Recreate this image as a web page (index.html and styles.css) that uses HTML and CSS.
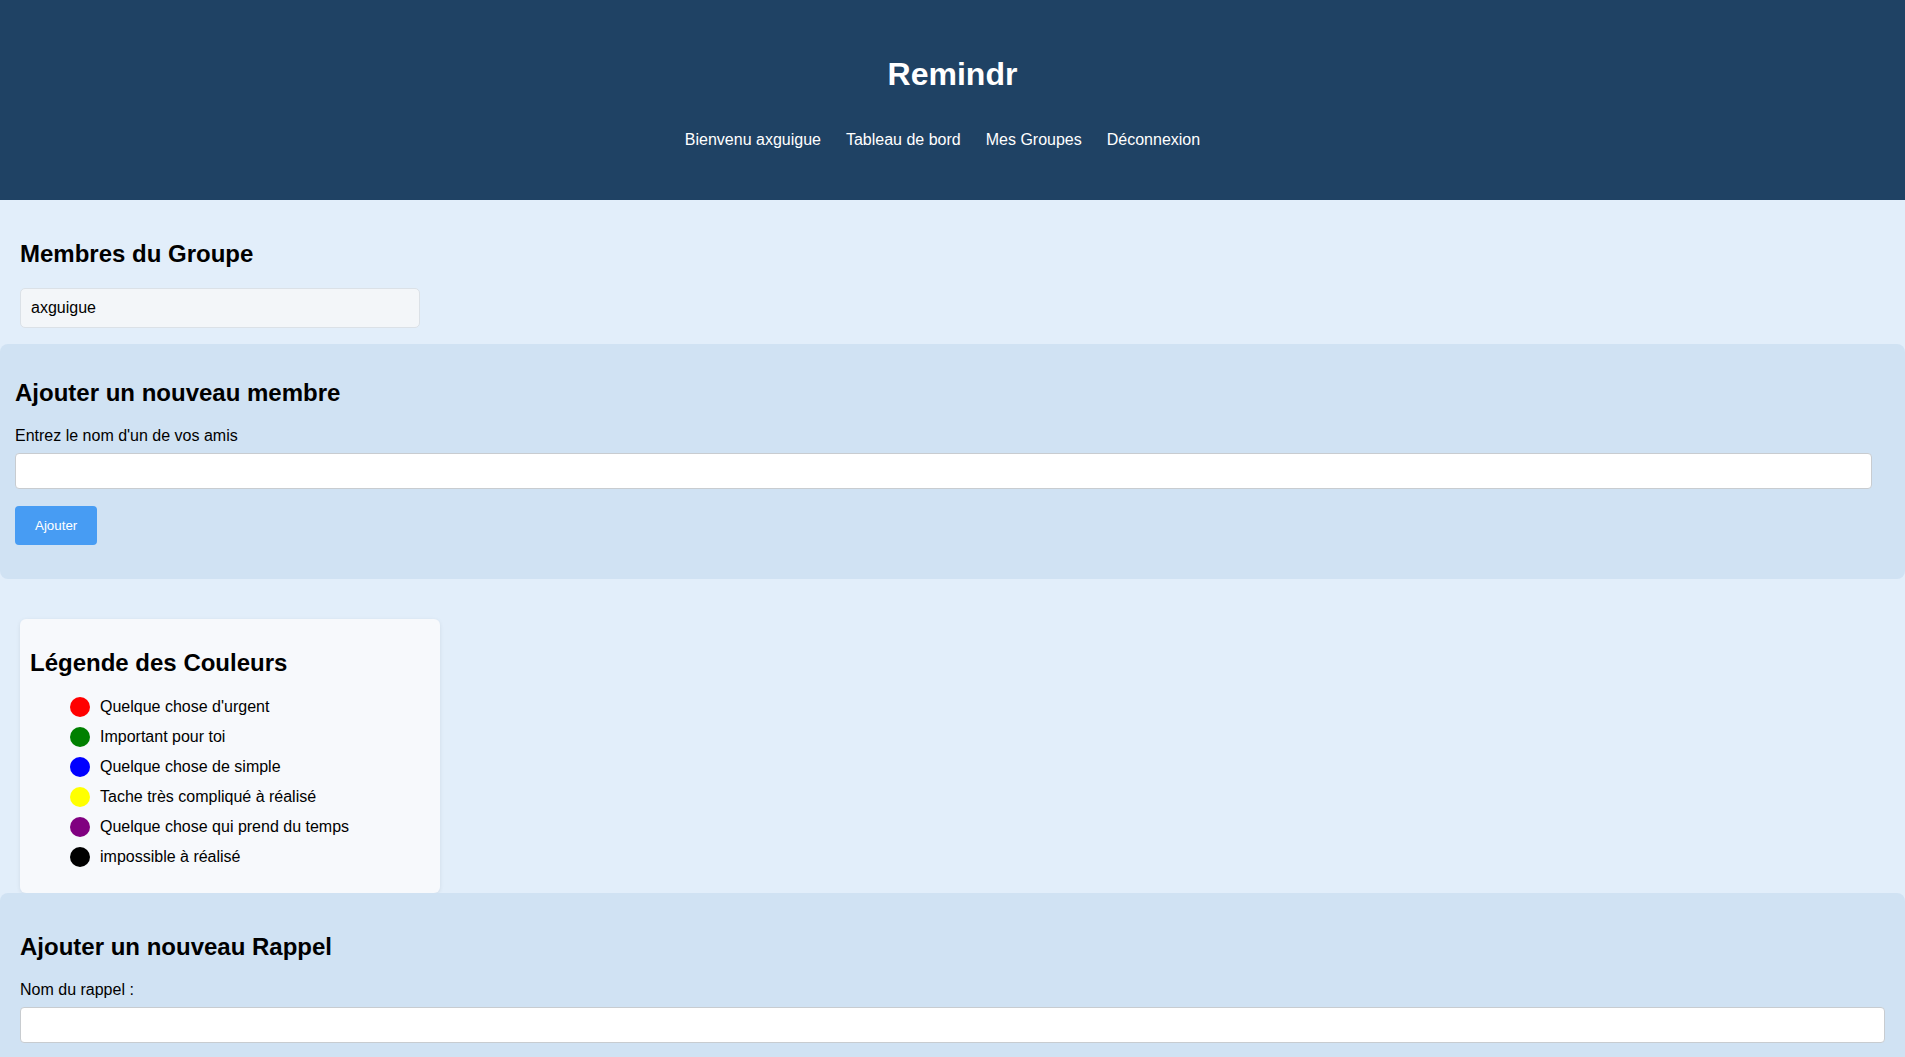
FILE: index.html
```html
<!DOCTYPE html>
<html lang="fr">
<head>
<meta charset="utf-8">
<title>Remindr</title>
<link rel="stylesheet" href="styles.css">
</head>
<body>
<header class="site-header">
  <h1 class="brand">Remindr</h1>
  <nav>
    <ul class="nav-list">
      <li><a href="#">Bienvenu axguigue</a></li>
      <li><a href="#">Tableau de bord</a></li>
      <li><a href="#">Mes Groupes</a></li>
      <li><a href="#">Déconnexion</a></li>
    </ul>
  </nav>
</header>
<main>
  <section class="members">
    <h2>Membres du Groupe</h2>
    <ul class="member-list">
      <li class="member">axguigue</li>
    </ul>
  </section>

  <section class="panel add-member">
    <h2>Ajouter un nouveau membre</h2>
    <form>
      <label class="field-label" for="friend">Entrez le nom d'un de vos amis</label>
      <input class="text-input member-input" id="friend" type="text">
      <button class="btn" type="button">Ajouter</button>
    </form>
  </section>

  <section class="legend">
    <h2>Légende des Couleurs</h2>
    <ul class="legend-list">
      <li><span class="dot dot-red"></span>Quelque chose d'urgent</li>
      <li><span class="dot dot-green"></span>Important pour toi</li>
      <li><span class="dot dot-blue"></span>Quelque chose de simple</li>
      <li><span class="dot dot-yellow"></span>Tache très compliqué à réalisé</li>
      <li><span class="dot dot-purple"></span>Quelque chose qui prend du temps</li>
      <li><span class="dot dot-black"></span>impossible à réalisé</li>
    </ul>
  </section>

  <section class="panel add-reminder">
    <h2>Ajouter un nouveau Rappel</h2>
    <form>
      <label class="field-label" for="rname">Nom du rappel :</label>
      <input class="text-input full-input" id="rname" type="text">
    </form>
  </section>
</main>
</body>
</html>
```
FILE: styles.css
```css
html, body {
  margin: 0;
  padding: 0;
}

body {
  background: #e2eefa;
  font-family: "Liberation Sans", Arial, sans-serif;
  font-size: 16px;
  color: #000;
}

.site-header {
  background: #1f4264;
  color: #fff;
  height: 200px;
  box-sizing: border-box;
  padding-top: 56px;
  text-align: center;
}

.brand {
  margin: 0;
  font-size: 32px;
  line-height: 37px;
  font-weight: bold;
}

.nav-list {
  list-style: none;
  margin: 38px 0 0;
  padding: 0 20px 0 0;
  display: flex;
  justify-content: center;
  gap: 25px;
}

.nav-list a {
  color: #fff;
  text-decoration: none;
  font-size: 16px;
  line-height: 18px;
}

h2 {
  font-size: 24px;
  font-weight: bold;
  margin: 20px 0;
  line-height: 28px;
}

.members {
  padding: 20px 20px 0;
}

.member-list {
  list-style: none;
  margin: 0 0 16px;
  padding: 0;
}

.member {
  max-width: 400px;
  box-sizing: border-box;
  padding: 10px;
  background: #f3f6f9;
  border: 1px solid #dbe1e7;
  border-radius: 5px;
  line-height: 18px;
}

.panel {
  background: #d0e2f3;
  border-radius: 8px;
}

.add-member {
  padding: 15px 15px 34px;
}

.field-label {
  display: block;
  margin-bottom: 8px;
  line-height: 18px;
}

.text-input {
  display: block;
  box-sizing: border-box;
  padding: 8px;
  font-size: 16px;
  line-height: 18px;
  height: 36px;
  font-family: inherit;
  border: 1px solid #c8ccd0;
  border-radius: 4px;
  background: #fff;
}

.member-input {
  width: calc(100% - 18px);
  margin: 0 0 17px;
}

.full-input {
  width: 100%;
  margin: 0 0 16px;
}

.btn {
  background: #479cf3;
  color: #fff;
  border: none;
  border-radius: 4px;
  padding: 12px 20px;
  font-family: inherit;
  font-size: 13.33px;
  line-height: 15px;
  cursor: pointer;
}

.legend {
  margin: 40px 0 0 20px;
  width: 400px;
  padding: 10px;
  background: #f7f9fc;
  border-radius: 6px;
  box-shadow: 0 1px 4px rgba(0, 0, 0, 0.08);
}

.legend-list {
  list-style: none;
  margin: 16px 0;
  padding: 0 0 0 40px;
  display: flex;
  flex-direction: column;
  gap: 10px;
}

.legend-list li {
  display: flex;
  align-items: center;
  height: 20px;
  line-height: 18px;
}

.dot {
  width: 20px;
  height: 20px;
  border-radius: 50%;
  margin-right: 10px;
  flex: none;
}

.dot-red { background: #ff0000; }
.dot-green { background: #008000; }
.dot-blue { background: #0000ff; }
.dot-yellow { background: #ffff00; }
.dot-purple { background: #800080; }
.dot-black { background: #000000; }

.add-reminder {
  padding: 20px 20px 60px;
}
```
